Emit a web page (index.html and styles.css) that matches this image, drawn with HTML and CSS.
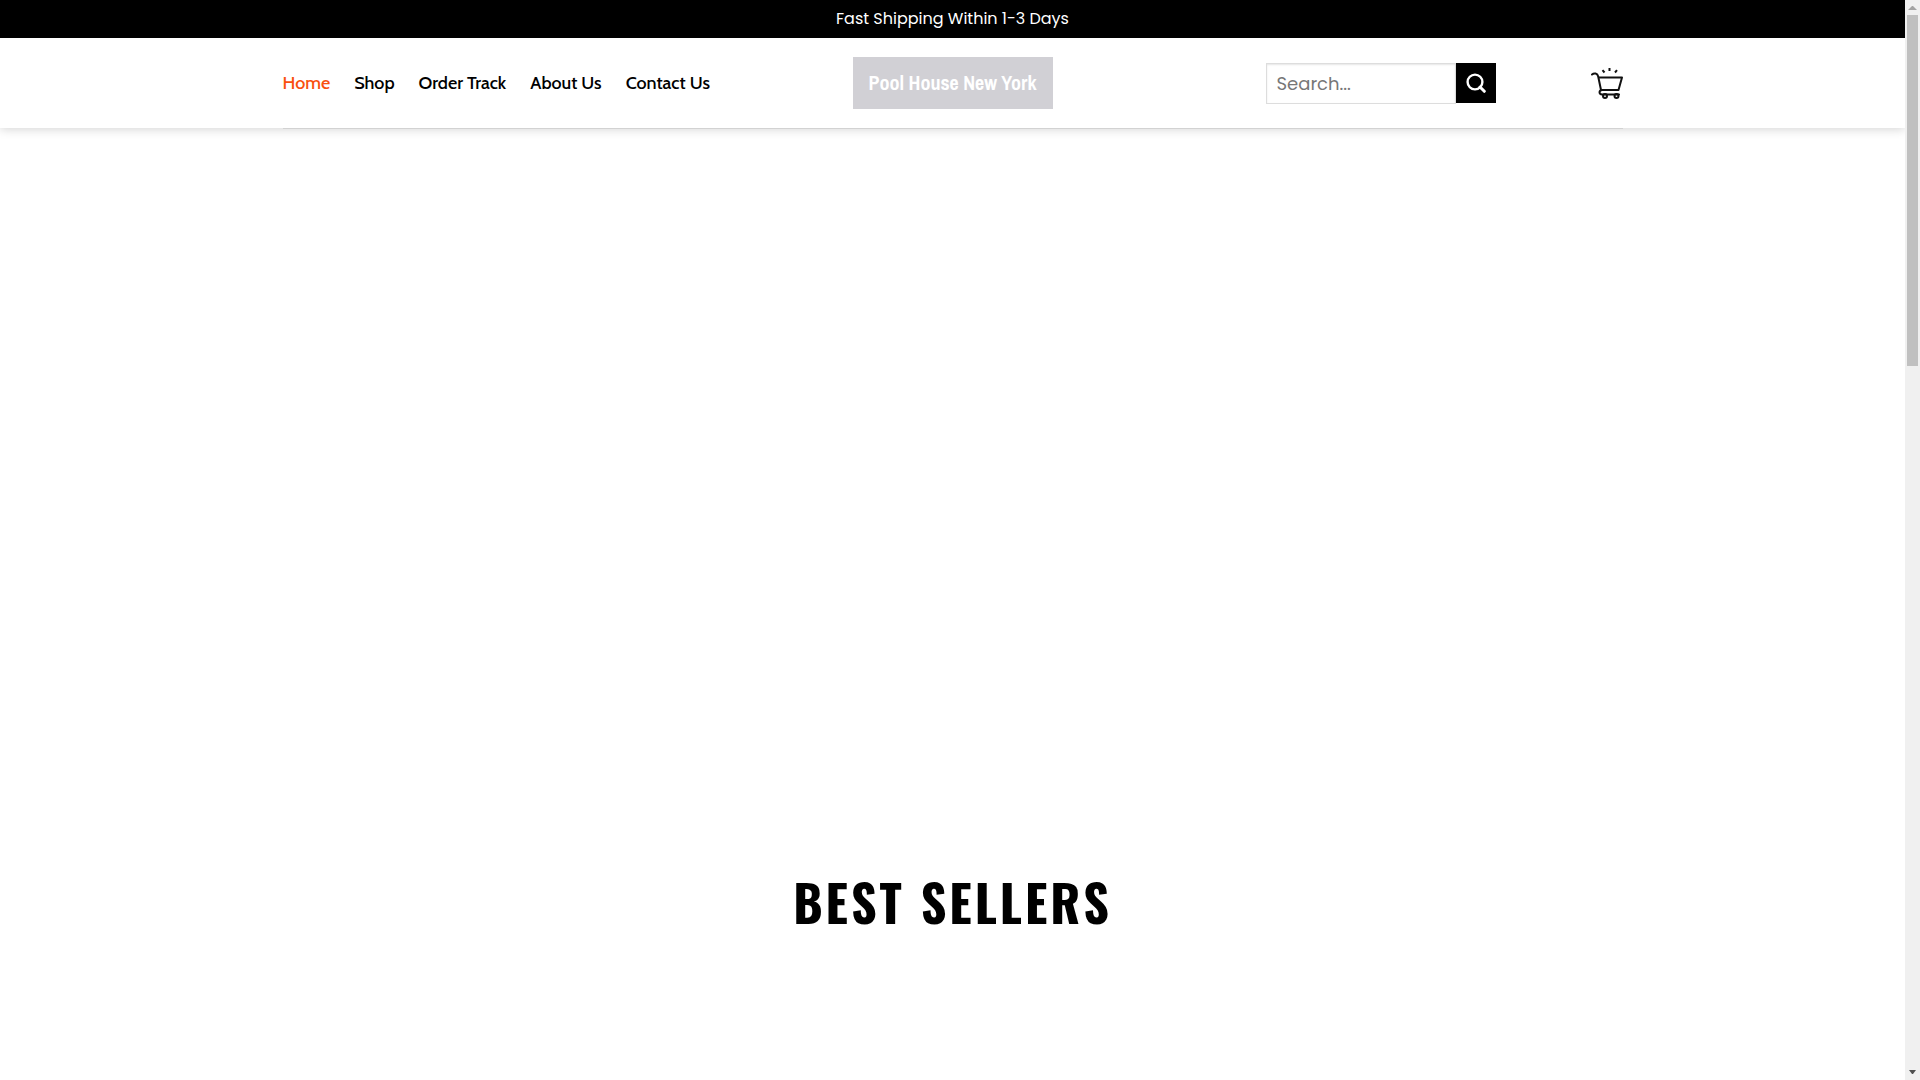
FILE: index.html
```html
<!DOCTYPE html>
<html lang="en">
<head>
    <meta charset="UTF-8">
    <meta name="viewport" content="width=device-width, initial-scale=1.0">
    <title>Pool House New York</title>
    <link rel="stylesheet" href="styles.css">
</head>
<body>
    <div class="page">
        <div class="top-bar">Fast Shipping Within 1-3 Days</div>

        <header class="header">
            <div class="container header-inner">
                <nav class="nav">
                    <a class="active" href="#">Home</a>
                    <a href="#">Shop</a>
                    <a href="#">Order Track</a>
                    <a href="#">About Us</a>
                    <a href="#">Contact Us</a>
                </nav>
                <a class="logo" href="#">Pool House New York</a>
                <div class="header-right">
                    <form class="search">
                        <input type="search" placeholder="Search..." aria-label="Search">
                        <button type="submit" aria-label="Submit search">
                            <svg width="20" height="20" viewBox="0 0 20 20" fill="none" stroke="#fff" stroke-width="2.4">
                                <circle cx="9" cy="9" r="7.4"/>
                                <path d="M14 14l4.3 4.3" stroke-width="3" stroke-linecap="round"/>
                            </svg>
                        </button>
                    </form>
                    <a class="cart" href="#" aria-label="Cart">
                        <svg width="32" height="32" viewBox="0 0 32 32" fill="none" stroke="#111" stroke-width="2" stroke-linecap="round" stroke-linejoin="round">
                            <path d="M1 7.5C3 5.8 6.5 6 7.2 9.5L10 23"/>
                            <path d="M8 10.5h23l-3.5 12.500H11c-3.3.3-3.3 4.5 0 4.500h17"/>
                            <circle cx="14" cy="29" r="2"/>
                            <circle cx="25.500" cy="29" r="2"/>
                            <path d="M18.5 1v3M11.5 3.2l2 2.300M26 3.200l-2 2.300" stroke-linecap="butt"/>
                        </svg>
                    </a>
                </div>
            </div>
        </header>

        <main>
            <section class="hero"></section>
            <section class="best-sellers container">
                <h2>BEST SELLERS</h2>
            </section>
        </main>
    </div>

    <div class="scrollbar" aria-hidden="true">
        <svg width="15" height="15" viewBox="0 0 15 15"><path d="M7 6h1l4 4H3z" fill="#a3a3a3"/></svg>
        <div class="thumb"></div>
        <svg width="15" height="15" viewBox="0 0 15 15"><path d="M4 5h7L8 9H7z" fill="#505050"/></svg>
    </div>
</body>
</html>
```
FILE: styles.css
```css
* {
    box-sizing: border-box;
}
body {
    margin: 0;
    display: flex;
    min-height: 100vh;
    background: #fff;
    color: #000;
    font-family: Poppins, Inter, sans-serif;
    font-size: 16px;
}
a {
    color: inherit;
    text-decoration: none;
}
.page {
    flex: 1;
}
.container {
    max-width: 1340px;
    margin: 0 auto;
}
.top-bar {
    background: #000;
    color: #fff;
    line-height: 38px;
    text-align: center;
}
.header {
    box-shadow: 0 1px 10px rgba(0, 0, 0, 0.18);
}
.header-inner {
    display: grid;
    grid-template-columns: 1fr auto 1fr;
    align-items: center;
    min-height: 90px;
    box-shadow: 0 1px #d2d2d2;
}
.nav {
    display: flex;
    gap: 24px;
    font-family: Cabin, Lato, sans-serif;
    font-size: 18px;
    font-weight: 500;
}
.nav .active {
    color: #f9500f;
}
.logo {
    min-width: 200px;
    background: #d1d0d5;
    color: #fff;
    font-family: "Archivo Narrow", "Liberation Sans", sans-serif;
    font-size: 20px;
    font-weight: 700;
    line-height: 52px;
    text-align: center;
}
.header-right {
    display: flex;
    justify-content: flex-end;
    align-items: center;
    gap: 95px;
}
.search {
    display: flex;
}
.search input {
    width: 190px;
    height: 41px;
    padding: 0 10px;
    border: 1px solid #ddd;
    border-radius: 0;
    outline: none;
    box-shadow: inset 0 1px 2px rgba(0, 0, 0, 0.1);
    font-family: inherit;
    font-size: 18px;
    appearance: none;
}
.search input::placeholder {
    color: #777;
}
.search button {
    display: flex;
    align-items: center;
    justify-content: center;
    width: 40px;
    height: 40px;
    padding: 0;
    border: none;
    background: #000;
    cursor: pointer;
}
.cart svg {
    display: block;
}
.hero {
    min-height: 718px;
}
.best-sellers {
    padding-bottom: 100px;
    text-align: center;
}
.best-sellers h2 {
    margin: 0;
    font-family: Oswald, "Liberation Sans", sans-serif;
    font-size: 50px;
    font-weight: 700;
    line-height: 110px;
    letter-spacing: 3px;
}
.scrollbar {
    display: flex;
    flex-direction: column;
    width: 15px;
    background: #f0f0f0;
}
.scrollbar svg {
    display: block;
}
.thumb {
    height: 32.5%;
    margin: 0 2px auto;
    background: #c0c0c0;
}
```
